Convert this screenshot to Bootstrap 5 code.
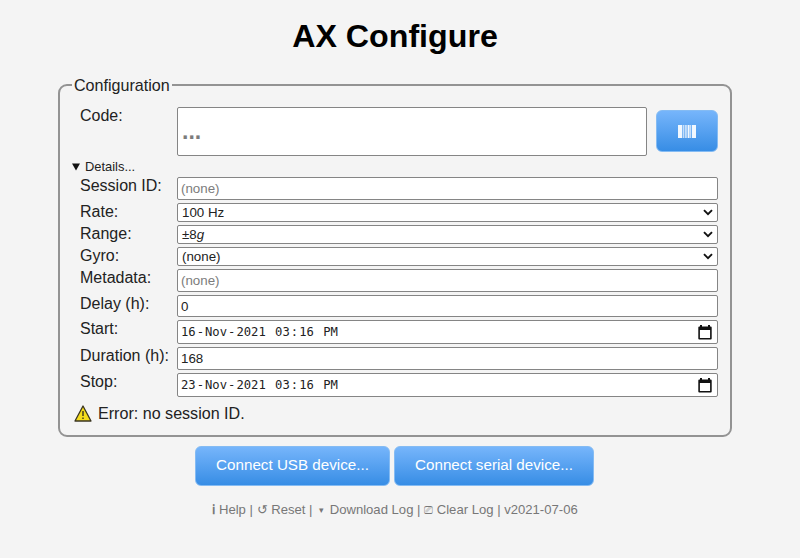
<!DOCTYPE html>
<html lang="en">
<head>
<meta charset="utf-8">
<meta name="viewport" content="width=device-width, initial-scale=1">
<title>AX Configure</title>
<link rel="stylesheet" href="https://cdn.jsdelivr.net/npm/bootstrap@5.3.0/dist/css/bootstrap.min.css">
<style>
body{background:#f4f4f4;color:#222;font:16px/18px "Liberation Sans",Arial,sans-serif;overflow:hidden;padding-right:10px}
h1{font-size:32.2px;line-height:37px;color:#000;padding-top:18px;margin-bottom:21px}
.config{width:674px;height:361px;border:2px solid #939393;border-radius:9px}
.config legend{font-size:16.1px;line-height:18px;width:auto;float:none;margin:0 0 0 12px;padding:0 2px}
.fields{padding:13px 12px 0 20px}
.line{display:grid;grid-template-columns:97px 1fr;margin-bottom:3px}
.line label{white-space:nowrap;height:18px}
.field{border:1px solid #858585;border-radius:2px;background:#fff;color:#222;font-size:13.33px;line-height:1;padding:0 3px;width:100%;min-width:0;outline:0}
.field::placeholder{color:#7c7c7c;opacity:1}
.code-field{width:470px;height:49px;font-size:23px;font-weight:bold;padding:0 4px}
.t{height:23px}.s{height:19px}.n{height:22px}.d{height:24px}
.pick{padding:0 4px}
.stamp{font:12.2px/1 "DejaVu Sans Mono",monospace;white-space:pre;margin-left:-1px}
.stamp span{padding:0 1px}
.cal-icon{margin-right:2px}
.blue{background:linear-gradient(#76b5fb,#378de5);border:1px solid #84bbf3;border-radius:6px;color:#fff;font-size:15.2px;line-height:18px;padding:0 0 2px}
.scan{width:62px;height:42px;margin:3px 0 0 9px;padding:0}
.usb{width:195px;height:40px}.serial{width:200px;height:40px}
.disclose{font-size:12.9px;line-height:16px;margin:3px 0 2px -8px}
.disclose svg{margin-right:5px}
.warning{margin:7px 0 0 -6px}.warning span{margin-left:6px;font-size:16.1px}
.actions{gap:4px;margin:9px 1px 0 0}
.foot{font-size:13.1px;line-height:16px;color:#777;margin-top:16px;white-space:pre}
.down{font-size:9px;display:inline-block;width:10px;text-align:center;vertical-align:1px}
.clear{font-size:11px}
</style>
<script src="https://cdn.jsdelivr.net/npm/bootstrap@5.3.0/dist/js/bootstrap.bundle.min.js"></script>
</head>
<body>
<svg class="d-none">
<symbol id="chev" viewBox="0 0 10 7"><path d="M1 1.200 5 5.200 9 1.200" fill="none" stroke="#111" stroke-width="1.900"/></symbol>
<symbol id="cal" viewBox="0 0 14 15"><path fill="#111" fill-rule="evenodd" d="M2 0h2v1.500h6V0h2v1.500h.7q1 0 1 1V13.500q0 1-1 1H1.300q-1 0-1-1V2.500q0-1 1-1H2zM1.900 5v7.900h10.200V5z"/></symbol>
</svg>
<h1 class="fw-bold text-center">AX Configure</h1>
<main class="d-flex flex-column align-items-center">
<fieldset class="config">
<legend>Configuration</legend>
<div class="fields">
<div class="line mb-0"><label for="code">Code:</label><div class="d-flex"><input id="code" class="field code-field" placeholder="..."><button class="btn blue scan d-flex align-items-center justify-content-center" aria-label="Scan"><svg width="18" height="13" viewBox="0 0 18 13" fill="#fff"><path d="M0 0h4.300v13H0zM5.300 0h1v13h-1zM7.300 0h1.300v13H7.300zM9.600 0h2v13h-2zM12.300 0h.9v13h-.9zM14 0h4v13h-4z" opacity=".92"/></svg></button></div></div>
<div class="disclose d-flex align-items-center"><svg width="8" height="8" viewBox="0 0 8 8"><path d="M0 .5h8L4 7.500z" fill="#111"/></svg><span>Details...</span></div>
<div class="line"><label for="sid">Session ID:</label><input id="sid" class="field t" placeholder="(none)"></div>
<div class="line"><label>Rate:</label><div class="field s pick d-flex align-items-center justify-content-between"><span>100 Hz</span><svg width="10" height="7"><use href="#chev"/></svg></div></div>
<div class="line"><label>Range:</label><div class="field s pick d-flex align-items-center justify-content-between"><span>±8<i>g</i></span><svg width="10" height="7"><use href="#chev"/></svg></div></div>
<div class="line"><label>Gyro:</label><div class="field s pick d-flex align-items-center justify-content-between"><span>(none)</span><svg width="10" height="7"><use href="#chev"/></svg></div></div>
<div class="line"><label for="meta">Metadata:</label><input id="meta" class="field t" placeholder="(none)"></div>
<div class="line"><label for="delay">Delay (h):</label><input id="delay" class="field n" value="0"></div>
<div class="line"><label>Start:</label><div class="field d d-flex align-items-center justify-content-between"><div class="stamp"><span>16</span>-<span>Nov</span>-<span>2021</span> <span>03</span>:<span>16</span> <span>PM</span></div><svg width="14" height="15" class="cal-icon"><use href="#cal"/></svg></div></div>
<div class="line"><label for="dur">Duration (h):</label><input id="dur" class="field t" value="168"></div>
<div class="line"><label>Stop:</label><div class="field d d-flex align-items-center justify-content-between"><div class="stamp"><span>23</span>-<span>Nov</span>-<span>2021</span> <span>03</span>:<span>16</span> <span>PM</span></div><svg width="14" height="15" class="cal-icon"><use href="#cal"/></svg></div></div>
<div class="d-flex align-items-center warning"><svg width="18" height="17" viewBox="0 0 18 17"><path d="M9 1 17 16H1z" fill="#f5dc1c" stroke="#3a3520" stroke-width="1.300" stroke-linejoin="round"/><path d="M9 6v5M9 12.500v1.500" stroke="#3a3520" stroke-width="1.400"/></svg><span>Error: no session ID.</span></div>
</div>
</fieldset>
<div class="d-flex actions"><button class="btn blue usb">Connect USB device...</button><button class="btn blue serial">Connect serial device...</button></div>
<footer class="foot d-flex"><span><b>ℹ</b> Help | </span><span>↺ Reset | </span><span><span class="down">▾</span> Download Log | </span><span><span class="clear">⎚</span> Clear Log | v2021-07-06</span></footer>
</main>
</body>
</html>
